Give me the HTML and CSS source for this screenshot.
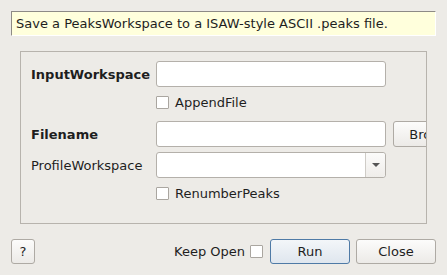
FILE: index.html
```html
<!DOCTYPE html>
<html lang="en">
<head>
    <meta charset="UTF-8">
    <title>SaveIsawPeaks</title>
    <link rel="stylesheet" href="styles.css">
</head>
<body>
    <div class="tip">Save a PeaksWorkspace to a ISAW-style ASCII .peaks file.</div>

    <div class="group">
        <div class="form">
            <label class="name bold">InputWorkspace</label>
            <div class="field"></div>
            <div></div>

            <div></div>
            <div class="check-row"><span class="check"></span>AppendFile</div>
            <div></div>

            <label class="name bold">Filename</label>
            <div class="field"></div>
            <button class="btn">Browse</button>

            <label class="name">ProfileWorkspace</label>
            <div class="field combo">
                <span class="combo-btn"><span class="arrow"></span></span>
            </div>
            <div></div>

            <div></div>
            <div class="check-row"><span class="check"></span>RenumberPeaks</div>
            <div></div>
        </div>
    </div>

    <div class="bottom">
        <button class="btn help">?</button>
        <div class="keep">Keep Open <span class="check"></span></div>
        <button class="btn default">Run</button>
        <button class="btn">Close</button>
    </div>
</body>
</html>
```

FILE: styles.css
```css
* {
    margin: 0;
    padding: 0;
    box-sizing: border-box;
}

body {
    background: #edebe7;
    font-family: 'DejaVu Sans', sans-serif;
    font-size: 13px;
    color: #1e1e1e;
    width: 447px;
    height: 275px;
    overflow: hidden;
}

.tip {
    margin: 11px 0 0 11px;
    width: 425px;
    height: 25px;
    line-height: 23px;
    padding-left: 4px;
    background: #ffffdc;
    border-top: 1px solid #8d8a86;
    border-left: 1px solid #8d8a86;
    border-right: 1px solid #ffffff;
    border-bottom: 1px solid #ffffff;
}

.group {
    margin: 15px 0 0 20px;
    width: 407px;
    height: 173px;
    border: 1px solid #b7b3ad;
    padding: 9px 0 0 10px;
    overflow: hidden;
}

.form {
    display: grid;
    grid-template-columns: 118px 230px 80px;
    grid-template-rows: 26px 24px 26px 26px 24px;
    column-gap: 7px;
    row-gap: 5px;
    width: 442px;
}

.name {
    display: flex;
    align-items: center;
}

.bold {
    font-weight: bold;
}

.field {
    background: #fff;
    border: 1px solid #b4b0aa;
    border-radius: 3px;
}

.combo {
    display: flex;
    justify-content: flex-end;
}

.combo-btn {
    width: 20px;
    border-left: 1px solid #cfccc7;
    display: flex;
    align-items: center;
    justify-content: center;
    background: linear-gradient(#fbfbfa, #efedea);
    border-radius: 0 3px 3px 0;
}

.arrow {
    width: 0;
    height: 0;
    border-left: 4px solid transparent;
    border-right: 4px solid transparent;
    border-top: 4px solid #555;
}

.check-row {
    display: flex;
    align-items: center;
    gap: 6px;
    padding-bottom: 3px;
}

.check {
    display: inline-block;
    width: 13px;
    height: 13px;
    background: #fff;
    border: 1px solid #aaa6a0;
    border-radius: 1px;
}

.btn {
    font-family: inherit;
    font-size: 13px;
    color: #1e1e1e;
    background: linear-gradient(#fcfcfb, #eceae7);
    border: 1px solid #aeaaa4;
    border-radius: 3px;
    height: 26px;
}

.bottom {
    display: flex;
    align-items: center;
    margin-top: 15px;
    padding: 0 11px;
    gap: 6px;
}

.bottom .btn {
    width: 80px;
    height: 25px;
}

.bottom .help {
    width: 24px;
}

.keep {
    margin-left: auto;
    margin-right: 1px;
    display: flex;
    align-items: center;
    gap: 5px;
}

.bottom .default {
    border-color: #4f7aa6;
    background: linear-gradient(#f3f6f9, #dfe6ee);
}
```
